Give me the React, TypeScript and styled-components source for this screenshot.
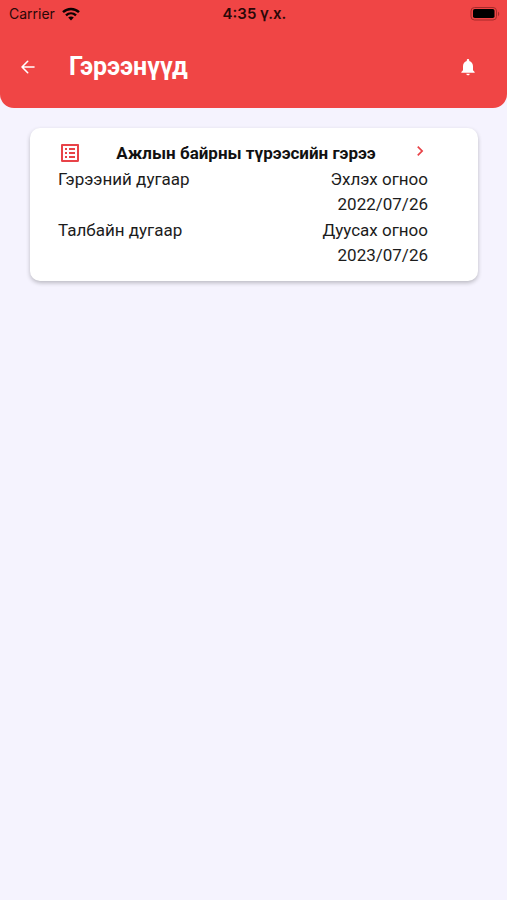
import React from 'react';
import styled, { createGlobalStyle } from 'styled-components';
import { MdChevronRight, MdNotifications, MdOutlineListAlt } from 'react-icons/md';

const GlobalStyle = createGlobalStyle`
  * { box-sizing: border-box; }
  body {
    margin: 0;
    background: #f5f3fe;
    color: #1c1c1c;
    font-family: Roboto, "Noto Sans", sans-serif;
  }
`;

const Page = styled.div`
  min-height: 100vh;
`;

const Header = styled.header`
  padding-bottom: 2px;
  background: #f04545;
  border-radius: 0 0 14px 14px;
`;

const StatusBar = styled.div`
  display: grid;
  grid-template-columns: 1fr auto 1fr;
  align-items: center;
  height: 27px;
  padding: 0 7px 0 9px;
  color: #2a0808;
  font: 400 14px/18px Inter, Roboto, sans-serif;
`;

const Carrier = styled.div`
  display: flex;
  align-items: center;
  gap: 7px;
`;

const Clock = styled.time`
  font-size: 15px;
  font-weight: 600;
`;

const BatteryIcon = styled.svg`
  justify-self: end;
`;

const NavBar = styled.nav`
  display: flex;
  align-items: center;
  height: 79px;
  padding: 0 29px 0 18px;
`;

const IconButton = styled.button`
  display: flex;
  padding: 0;
  border: 0;
  background: none;
  color: #fff;
  font-size: 20px;
  cursor: pointer;
`;

const PageTitle = styled.h1`
  flex: 1;
  margin: 0 0 0 31px;
  color: #fff;
  font-size: 25px;
  line-height: 31px;
  font-weight: 700;
`;

const Content = styled.main`
  padding: 20px 29px 20px 30px;
`;

const ContractCard = styled.article`
  padding: 12px 50px 13px 28px;
  border-radius: 10px;
  background: #fff;
  box-shadow: 0 2px 4px rgba(0, 0, 0, 0.24);
`;

const CardHeader = styled.header`
  display: flex;
  align-items: center;
  justify-content: space-between;
  height: 26px;
  margin-right: -2px;
`;

const ListIcon = styled(MdOutlineListAlt)`
  color: #e84348;
  font-size: 24px;
`;

const CardTitle = styled.h2`
  margin: 0;
  font-size: 17px;
  line-height: 26px;
  font-weight: 700;
  color: #111;
`;

const OpenButton = styled(IconButton)`
  color: #e84348;
  height: 22px;
  align-items: center;
  align-self: flex-start;
`;

const Details = styled.dl`
  margin: 0;
  font-size: 17px;
  line-height: 26px;
`;

const DetailRow = styled.div`
  display: flex;
  justify-content: space-between;
`;

const DetailLabel = styled.dt``;

const DateField = styled.div`
  text-align: right;
`;

const DateValue = styled.dd`
  margin: 0;
  line-height: 25px;
`;

const details = [
  { label: 'Гэрээний дугаар', dateLabel: 'Эхлэх огноо', date: '2022/07/26' },
  { label: 'Талбайн дугаар', dateLabel: 'Дуусах огноо', date: '2023/07/26' },
];

function Wifi() {
  return (
    <svg width="18" height="14" viewBox="0 0 18 14" aria-hidden="true">
      <g fill="none" stroke="#0c0202" strokeWidth="2.4">
        <path d="M1 5.2C5.5.9 12.5.9 17 5.2" />
        <path d="M4 8.4C6.9 5.7 11.1 5.7 14 8.4" />
      </g>
      <path d="M6.2 10.6C7.8 9.2 10.2 9.2 11.8 10.6L9 13.6Z" fill="#0c0202" />
    </svg>
  );
}

function Battery() {
  return (
    <BatteryIcon width="30" height="14" viewBox="0 0 30 14" role="img" aria-label="Battery">
      <rect x="1" y="0.5" width="25.5" height="12.5" rx="3.5" fill="none" stroke="#a52b2b" />
      <rect x="3" y="2" width="21.5" height="9" rx="1.8" fill="#000" />
      <path d="M28 4.8C29.6 5.4 29.6 8.6 28 9.2Z" fill="#a52b2b" />
    </BatteryIcon>
  );
}

function BackArrow() {
  return (
    <svg width="20" height="20" viewBox="0 0 20 20" fill="none" stroke="currentColor" strokeWidth="1.6" strokeLinecap="round" strokeLinejoin="round" aria-hidden="true">
      <path d="M16 10H4M9.700 4.300L4 10l5.700 5.700" />
    </svg>
  );
}

export default function App() {
  return (
    <Page>
      <GlobalStyle />
      <Header>
        <StatusBar>
          <Carrier>
            Carrier
            <Wifi />
          </Carrier>
          <Clock>4:35 ү.х.</Clock>
          <Battery />
        </StatusBar>
        <NavBar>
          <IconButton type="button" aria-label="Буцах">
            <BackArrow />
          </IconButton>
          <PageTitle>Гэрээнүүд</PageTitle>
          <IconButton type="button" aria-label="Мэдэгдэл">
            <MdNotifications />
          </IconButton>
        </NavBar>
      </Header>
      <Content>
        <ContractCard>
          <CardHeader>
            <ListIcon />
            <CardTitle>Ажлын байрны түрээсийн гэрээ</CardTitle>
            <OpenButton type="button" aria-label="Дэлгэрэнгүй">
              <MdChevronRight />
            </OpenButton>
          </CardHeader>
          <Details>
            {details.map((item) => (
              <DetailRow key={item.label}>
                <DetailLabel>{item.label}</DetailLabel>
                <DateField>
                  <dt>{item.dateLabel}</dt>
                  <DateValue>{item.date}</DateValue>
                </DateField>
              </DetailRow>
            ))}
          </Details>
        </ContractCard>
      </Content>
    </Page>
  );
}
